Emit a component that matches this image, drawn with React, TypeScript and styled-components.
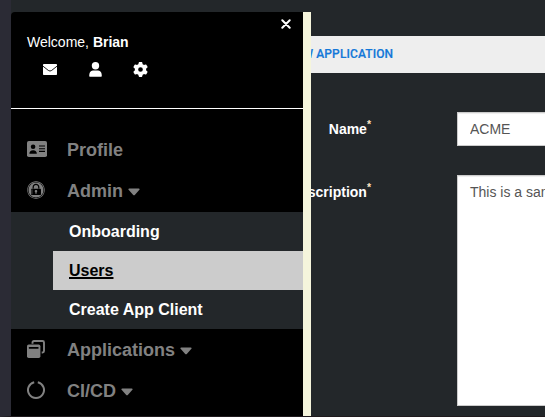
import React from 'react';
import styled, { createGlobalStyle, css } from 'styled-components';
import { FaExpeditedssl, FaGear } from 'react-icons/fa6';

const GlobalStyle = createGlobalStyle`
  * { box-sizing: border-box; }
  body {
    margin: 0;
    overflow: hidden;
    background: #23272a;
    font-family: 'Liberation Sans', Arial, sans-serif;
  }
`;

const Page = styled.div`
  position: relative;
  width: 545px;
  height: 417px;
  overflow: hidden;
  background: #23272a;
  border-left: 11px solid #2b2b35;
  border-bottom: 1px solid #1f1a1d;
`;

const Content = styled.main`
  padding-top: 36px;
`;

const TitleBar = styled.header`
  display: flex;
  align-items: center;
  height: 37px;
  padding: 0 0 2px 276px;
  background: #eee;
  color: #1478d8;
  font: 500 12px Roboto, sans-serif;
  letter-spacing: 0.11px;
  -webkit-text-stroke: 0.2px #1478d8;
  white-space: pre;
`;

const Form = styled.form`
  display: grid;
  grid-template-columns: 360px 1fr;
  column-gap: 86px;
  row-gap: 29px;
  padding-top: 39px;
  width: 700px;
`;

const Label = styled.label`
  padding-top: 9px;
  text-align: right;
  color: #fff;
  font-size: 14px;
  font-weight: bold;
  line-height: 16px;
`;

const Required = styled.sup`
  color: #ffe4c4;
  font-size: 10.5px;
  line-height: 0;
`;

const fieldStyle = css`
  display: block;
  margin: 0;
  width: 100%;
  border: 1px solid #ccc;
  border-radius: 0;
  outline: none;
  background: #fff;
  color: #555;
  font: 14px 'Liberation Sans', Arial, sans-serif;
  box-shadow: inset 0 1px 1px rgba(0, 0, 0, 0.075);
`;

const TextInput = styled.input`
  ${fieldStyle}
  height: 34px;
  padding: 0 12px;
`;

const TextArea = styled.textarea`
  ${fieldStyle}
  height: 231px;
  padding: 6px 12px;
  line-height: 20px;
  resize: none;
`;

const Drawer = styled.aside`
  position: absolute;
  top: 12px;
  left: 0;
  width: 300px;
  height: 405px;
  border-right: 8px solid #f5f5dc;
  border-top-left-radius: 4px;
  background: #000;
`;

const DrawerHeader = styled.div`
  position: relative;
  height: 97px;
  padding: 22px 16px 0;
  border-bottom: 1px solid #fff;
  color: #fff;
  font-size: 14px;
  line-height: 16px;
`;

const CloseButton = styled.button`
  position: absolute;
  top: 7px;
  right: 12px;
  display: flex;
  padding: 0;
  border: 0;
  background: none;
  color: #fff;
`;

const Shortcuts = styled.div`
  display: flex;
  gap: 30px;
  padding: 12px 0 0 16px;
  font-size: 15px;
`;

const Shortcut = styled.span`
  display: flex;
  flex: none;
  width: 15px;
  height: 15px;
  align-items: center;
`;

const Nav = styled.nav`
  padding-top: 21px;
`;

const NavRow = styled.div`
  display: flex;
  height: 41px;
  align-items: center;
  padding-left: 16px;
  color: #818181;
  font-size: 18px;
  font-weight: bold;
`;

const NavIcon = styled.span`
  display: flex;
  width: 40px;
  padding-bottom: 3px;
`;

const CaretSvg = styled.svg`
  margin: 0 0 0 5px;
`;

const SubMenu = styled.div`
  margin-bottom: 1px;
  padding-left: 42px;
  background: #23272a;
`;

const SubItem = styled.a<{ $active?: boolean }>`
  display: flex;
  height: 39px;
  align-items: center;
  padding-left: 16px;
  background: ${({ $active }) => ($active ? '#ccc' : 'transparent')};
  color: ${({ $active }) => ($active ? '#000' : '#fff')};
  font-size: 16px;
  font-weight: bold;
  text-decoration: ${({ $active }) => ($active ? 'underline' : 'none')};
  text-decoration-thickness: 2px;
`;

const Caret = () => (
  <CaretSvg width="12" height="8" viewBox="0 0 12 8" fill="currentColor">
    <path d="M1.2.5h9.6c.8 0 1.1.8.6 1.3L6.8 6.9c-.4.5-1.2.5-1.6 0L.6 1.8C.1 1.3.4.5 1.2.5z" />
  </CaretSvg>
);

const CloseIcon = () => (
  <svg width="10" height="10" viewBox="0 0 10 10" stroke="currentColor" strokeWidth="2" strokeLinecap="round">
    <path d="M1.3 1.3 8.7 8.7M8.7 1.3 1.3 8.7" />
  </svg>
);

const MailIcon = () => (
  <svg width="14" height="11" viewBox="0 0 14 11">
    <rect width="14" height="11" rx="0.8" fill="currentColor" />
    <path d="M0 2.2 5.3 6.4q1.7 1.3 3.4 0L14 2.2" fill="none" stroke="#000" strokeWidth="0.9" />
  </svg>
);

const UserIcon = () => (
  <svg width="14" height="15" viewBox="-1 0 14 15" fill="currentColor">
    <circle cx="6.5" cy="3.8" r="3.7" />
    <path d="M3.8 8.4h5.4Q12.8 8.8 12.8 14q0 .7-.8.7H1q-.8 0-.8-.7Q.2 8.8 3.8 8.4z" />
  </svg>
);

const CardIcon = () => (
  <svg width="20" height="16" viewBox="0 0 20 16">
    <rect width="20" height="16" rx="1.8" fill="currentColor" />
    <circle cx="6.1" cy="5.8" r="2.3" fill="#000" />
    <path d="M2.4 12.7q0-3.5 3.7-3.5t3.7 3.5z" fill="#000" />
    <path d="M12 5h6M12 7.7h6M12 10.4h6" stroke="#000" strokeWidth="1.1" />
  </svg>
);

const WindowsIcon = () => (
  <svg width="18" height="18" viewBox="0 0 18 18">
    <path d="M5.5 3.7V2.5Q5.5 1 7 1h8.5Q17 1 17 2.5V11q0 1.5-1.5 1.5h-.8" fill="none" stroke="currentColor" strokeWidth="1.9" />
    <rect x="0" y="4.6" width="13.4" height="13.4" rx="1.7" fill="currentColor" />
    <rect x="1.9" y="7" width="9.6" height="1.8" rx="0.4" fill="#000" />
  </svg>
);

const RingIcon = () => (
  <svg width="18" height="18" viewBox="0 0 18 18">
    <path d="M7.2 1.2a8 8 0 1 0 3.6 0" fill="none" stroke="currentColor" strokeWidth="2" />
  </svg>
);

export default function App() {
  return (
    <Page>
      <GlobalStyle />
      <Content>
        <TitleBar>NEW APPLICATION</TitleBar>
        <Form>
          <Label>Name<Required>*</Required></Label>
          <TextInput defaultValue="ACME" />
          <Label>Description<Required>*</Required></Label>
          <TextArea defaultValue="This is a sample application" />
        </Form>
      </Content>
      <Drawer>
        <DrawerHeader>
          <CloseButton aria-label="Close"><CloseIcon /></CloseButton>
          Welcome, <b>Brian</b>
          <Shortcuts>
            <Shortcut><MailIcon /></Shortcut>
            <Shortcut><UserIcon /></Shortcut>
            <Shortcut><FaGear /></Shortcut>
          </Shortcuts>
        </DrawerHeader>
        <Nav>
          <NavRow><NavIcon><CardIcon /></NavIcon>Profile</NavRow>
          <NavRow><NavIcon><FaExpeditedssl /></NavIcon>Admin<Caret /></NavRow>
          <SubMenu>
            <SubItem>Onboarding</SubItem>
            <SubItem $active>Users</SubItem>
            <SubItem>Create App Client</SubItem>
          </SubMenu>
          <NavRow><NavIcon><WindowsIcon /></NavIcon>Applications<Caret /></NavRow>
          <NavRow><NavIcon><RingIcon /></NavIcon>CI/CD<Caret /></NavRow>
        </Nav>
      </Drawer>
    </Page>
  );
}
